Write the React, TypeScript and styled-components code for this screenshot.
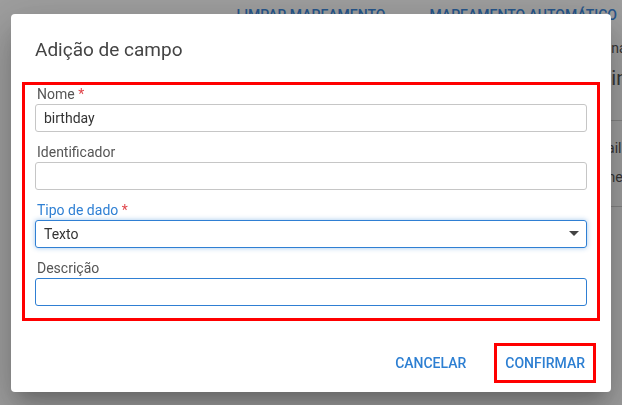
import React from 'react'
import styled, { createGlobalStyle } from 'styled-components'

const GlobalStyle = createGlobalStyle`
  * { box-sizing: border-box; }
  html, body {
    margin: 0;
    padding: 0;
    overflow: hidden;
  }
  body {
    font-family: Roboto, 'Liberation Sans', sans-serif;
    background: #ffffff;
  }
`

const FIELDS = [
  { label: 'Nome', required: true, value: 'birthday', state: 'idle' },
  { label: 'Identificador', required: false, value: '', state: 'idle' },
  { label: 'Tipo de dado', required: true, value: 'Texto', state: 'focused', select: true },
  { label: 'Descrição', required: false, value: '', state: 'active' },
] as const

type FieldState = 'idle' | 'focused' | 'active'

const App = () => {
  return (
    <>
      <GlobalStyle />
      <Page>
        <Toolbar>
          <PageAction>Limpar mapeamento</PageAction>
          <PageAction>Mapeamento automático</PageAction>
        </Toolbar>
        <Main>
          <div />
          <SideColumn>
            <SideSection>
              <SideText>Coluna</SideText>
              <SideHeading>Plain</SideHeading>
            </SideSection>
            <SideSection $tight>
              <SideText>E-mail</SideText>
              <SideText>Phone</SideText>
            </SideSection>
          </SideColumn>
        </Main>

        <Overlay>
          <Dialog>
            <Title>Adição de campo</Title>
            <FormBox>
              {FIELDS.map((field) => (
                <Field key={field.label}>
                  <Label $focused={field.state === 'focused'}>
                    {field.label}
                    {field.required && <Required> *</Required>}
                  </Label>
                  <InputBox $state={field.state}>
                    <span>{field.value}</span>
                    {'select' in field && field.select && <Caret />}
                  </InputBox>
                </Field>
              ))}
            </FormBox>
            <Actions>
              <TextButton>Cancelar</TextButton>
              <TextButton $highlighted>Confirmar</TextButton>
            </Actions>
          </Dialog>
        </Overlay>
      </Page>
    </>
  )
}

const Page = styled.div`
  position: relative;
  width: 100vw;
  height: 100vh;
  display: flex;
  flex-direction: column;
`

const Toolbar = styled.div`
  display: flex;
  justify-content: flex-end;
  gap: 44px;
  height: 30px;
  padding: 7px 5px 0 0;
`

const PageAction = styled.span`
  font-size: 14px;
  font-weight: 500;
  line-height: 16px;
  color: #3d8be0;
  text-transform: uppercase;
  white-space: nowrap;
`

const Main = styled.div`
  flex: 1;
  display: grid;
  grid-template-columns: 1fr 39px;
`

const SideColumn = styled.div`
  display: flex;
  flex-direction: column;
  white-space: nowrap;
  color: #555;
`

const SideSection = styled.div<{ $tight?: boolean }>`
  display: flex;
  flex-direction: column;
  gap: ${(p) => (p.$tight ? '9px' : '6px')};
  padding: ${(p) => (p.$tight ? '17px 0 19px' : '8px 0 28px')};
  border-bottom: 1px solid #d4d4d4;
`

const SideText = styled.span`
  font-size: 14px;
  line-height: 20px;
`

const SideHeading = styled.span`
  font-size: 20px;
  line-height: 28px;
`

const Overlay = styled.div`
  position: fixed;
  inset: 0;
  background: rgba(0, 0, 0, 0.38);
  display: flex;
  align-items: center;
  justify-content: center;
`

const Dialog = styled.div`
  width: 600px;
  display: flex;
  flex-direction: column;
  background: #fff;
  border-radius: 4px;
  box-shadow: 0 11px 15px -7px rgba(0, 0, 0, 0.2), 0 24px 38px 3px rgba(0, 0, 0, 0.14),
    0 9px 46px 8px rgba(0, 0, 0, 0.12);
`

const Title = styled.h2`
  margin: 0;
  padding: 24px 24px 0;
  font-size: 19px;
  font-weight: 400;
  line-height: 24px;
  color: #444;
`

const FormBox = styled.div`
  margin: 20px 11px 0 11px;
  border: 3px solid #ff0000;
  padding: 0 10px 12px;
  display: flex;
  flex-direction: column;
  gap: 11px;
`

const Field = styled.div`
  display: flex;
  flex-direction: column;
  gap: 1px;
`

const Label = styled.label<{ $focused?: boolean }>`
  font-size: 14px;
  line-height: 18px;
  padding-left: 2px;
  color: ${(p) => (p.$focused ? '#2f80d4' : '#555')};
`

const Required = styled.span`
  color: #e0474c;
`

const InputBox = styled.div<{ $state: FieldState }>`
  height: 28px;
  display: flex;
  align-items: center;
  justify-content: space-between;
  padding: 0 7px 0 8px;
  font-size: 14px;
  color: #333;
  border-radius: 3px;
  border: 1px solid ${(p) => (p.$state === 'idle' ? '#c6c6c6' : '#2f7fd3')};
  box-shadow: ${(p) => (p.$state === 'focused' ? '0 0 5px rgba(47, 127, 211, 0.45)' : 'none')};
`

const Caret = styled.span`
  width: 0;
  height: 0;
  border-left: 5px solid transparent;
  border-right: 5px solid transparent;
  border-top: 5px solid #444;
`

const Actions = styled.div`
  display: flex;
  justify-content: flex-end;
  align-items: center;
  gap: 17px;
  margin-top: 22px;
  padding: 0 15px 9px 0;
`

const TextButton = styled.button<{ $highlighted?: boolean }>`
  height: 40px;
  padding: 0 8px;
  border: 3px solid ${(p) => (p.$highlighted ? '#ff0000' : 'transparent')};
  background: none;
  font-family: Roboto, 'Liberation Sans', sans-serif;
  font-size: 14px;
  font-weight: 500;
  color: #2d7fd2;
  text-transform: uppercase;
  cursor: pointer;
`

export default App
